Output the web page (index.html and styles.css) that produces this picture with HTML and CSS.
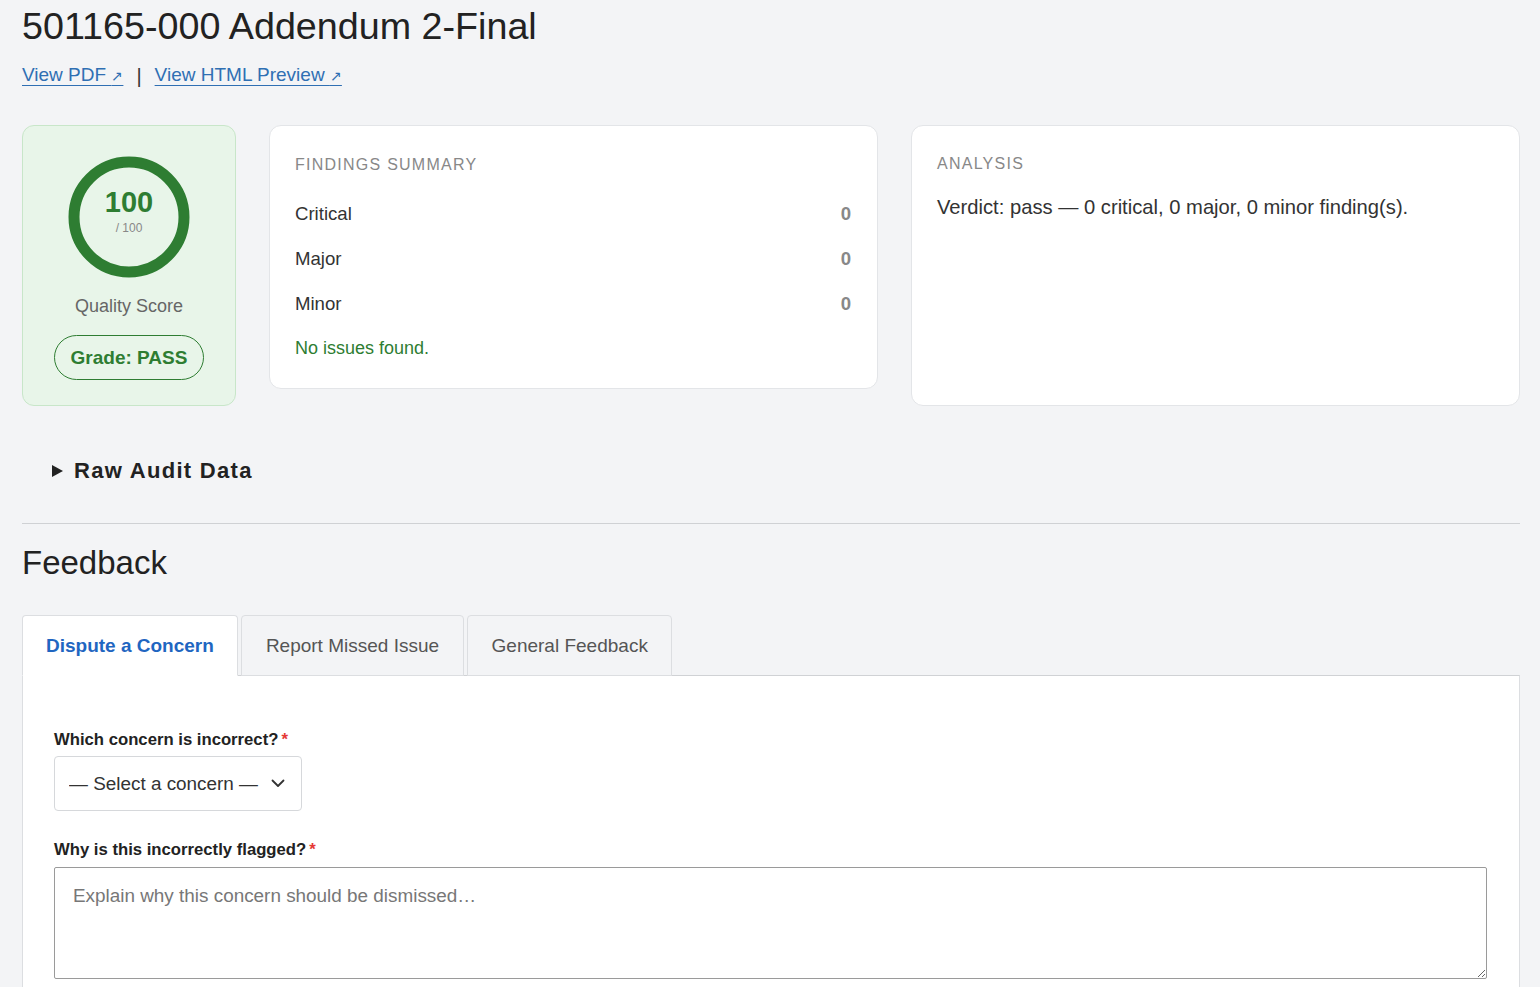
FILE: index.html
```html
<!DOCTYPE html>
<html lang="en">
<head>
<meta charset="utf-8">
<title>501165-000 Addendum 2-Final</title>
<link rel="stylesheet" href="styles.css">
</head>
<body>
<main class="page">
  <h1 class="title">501165-000 Addendum 2-Final</h1>
  <div class="doc-links">
    <a href="#" class="doc-link">View PDF <span class="ext">↗</span></a>
    <span class="sep">|</span>
    <a href="#" class="doc-link">View HTML Preview <span class="ext">↗</span></a>
  </div>

  <section class="cards">
    <div class="card score-card">
      <div class="ring">
        <svg width="122" height="122" viewBox="0 0 122 122" aria-hidden="true">
          <circle cx="61" cy="61" r="55" fill="none" stroke="#2e7d32" stroke-width="11"/>
        </svg>
        <div class="ring-text">
          <div class="ring-num">100</div>
          <div class="ring-max">/ 100</div>
        </div>
      </div>
      <div class="score-label">Quality Score</div>
      <div class="grade">Grade: PASS</div>
    </div>

    <div class="card findings-card">
      <div class="card-label">Findings Summary</div>
      <div class="row"><span>Critical</span><span class="count">0</span></div>
      <div class="row"><span>Major</span><span class="count">0</span></div>
      <div class="row"><span>Minor</span><span class="count">0</span></div>
      <div class="ok-note">No issues found.</div>
    </div>

    <div class="card analysis-card">
      <div class="card-label">Analysis</div>
      <p class="verdict">Verdict: pass — 0 critical, 0 major, 0 minor finding(s).</p>
    </div>
  </section>

  <details class="raw">
    <summary class="raw-summary"><span class="tri"></span>Raw Audit Data</summary>
  </details>

  <hr class="divider">

  <h2 class="section-title">Feedback</h2>

  <div class="tabs">
    <button class="tab active">Dispute a Concern</button>
    <button class="tab">Report Missed Issue</button>
    <button class="tab">General Feedback</button>
  </div>
  <div class="panel">
    <label class="field-label">Which concern is incorrect?<span class="req">*</span></label>
    <div class="select-wrap">
      <select class="select">
        <option>— Select a concern —</option>
      </select>
      <svg class="chev" width="14" height="9" viewBox="0 0 14 9" aria-hidden="true">
        <path d="M1.5 1.5 L7 7 L12.5 1.5" fill="none" stroke="#333" stroke-width="1.8" stroke-linecap="round" stroke-linejoin="round"/>
      </svg>
    </div>
    <label class="field-label second">Why is this incorrectly flagged?<span class="req">*</span></label>
    <textarea class="textarea" placeholder="Explain why this concern should be dismissed…"></textarea>
  </div>
</main>
</body>
</html>
```

FILE: styles.css
```css
* { box-sizing: border-box; }

html, body {
  margin: 0;
  padding: 0;
  background: #f3f4f6;
}

body {
  font-family: "Liberation Sans", Arial, sans-serif;
  color: #333;
  font-size: 18px;
}

.page {
  padding: 4px 20px 0 22px;
}

.title {
  margin: 0;
  font-size: 37.7px;
  line-height: 44px;
  font-weight: 400;
  color: #222;
}

.doc-links {
  margin-top: 15px;
  line-height: 24px;
  font-size: 19px;
  display: flex;
  align-items: center;
}

.doc-link {
  color: #2f6fb3;
  text-decoration: underline;
  text-underline-offset: 4px;
  text-decoration-thickness: 1px;
}

.ext {
  font-size: 14px;
}

.sep {
  margin: 0 13px 0 13px;
  color: #333;
  font-size: 20px;
}

.cards {
  margin-top: 37px;
  display: grid;
  grid-template-columns: 214px 1fr 1fr;
  column-gap: 33px;
  align-items: stretch;
}

.card {
  background: #fff;
  border: 1px solid #e3e5e8;
  border-radius: 12px;
}

.score-card {
  background: #e8f5e9;
  border-color: #c8e6c9;
  padding: 30px 0 25px;
  display: flex;
  flex-direction: column;
  align-items: center;
}

.ring {
  position: relative;
  width: 122px;
  height: 122px;
}

.ring svg { display: block; }

.ring-text {
  position: absolute;
  inset: 0;
  display: flex;
  flex-direction: column;
  align-items: center;
  justify-content: center;
  padding-bottom: 12px;
}

.ring-num {
  font-size: 29px;
  line-height: 32px;
  font-weight: 700;
  color: #2e7d32;
}

.ring-max {
  margin-top: 2px;
  font-size: 12px;
  line-height: 16px;
  color: #888;
}

.score-label {
  margin-top: 17px;
  font-size: 18px;
  line-height: 22px;
  color: #666;
}

.grade {
  margin-top: 18px;
  height: 45px;
  width: 150px;
  border: 1px solid #2e7d32;
  border-radius: 23px;
  display: flex;
  align-items: center;
  justify-content: center;
  font-size: 19px;
  font-weight: 700;
  color: #2e7d32;
}

.findings-card {
  align-self: start;
  padding: 29px 26px 27px 25px;
}

.analysis-card {
  padding: 28px 26px 27px 25px;
}

.card-label {
  font-size: 16px;
  line-height: 20px;
  text-transform: uppercase;
  letter-spacing: 1.25px;
  color: #888;
}

.row {
  display: flex;
  justify-content: space-between;
  padding: 10px 0;
  line-height: 25px;
  font-size: 18.6px;
  color: #333;
}

.findings-card .card-label {
  margin-bottom: 16px;
}

.count {
  font-weight: 700;
  color: #888;
}

.ok-note {
  margin-top: 10px;
  line-height: 25px;
  font-size: 18px;
  color: #2e7d32;
}

.verdict {
  margin: 21px 0 0;
  font-size: 20.2px;
  line-height: 25px;
  color: #333;
}

.raw {
  margin-top: 51px;
  padding-left: 30px;
}

.raw-summary {
  list-style: none;
  display: flex;
  align-items: center;
  font-size: 22px;
  font-weight: 700;
  letter-spacing: 1.3px;
  line-height: 28px;
  color: #222;
  cursor: pointer;
}

.raw-summary::-webkit-details-marker { display: none; }

.tri {
  width: 0;
  height: 0;
  border-top: 6px solid transparent;
  border-bottom: 6px solid transparent;
  border-left: 11px solid #222;
  margin-right: 11px;
}

.divider {
  margin: 38px 0 0;
  border: 0;
  border-top: 1px solid #cfd1d4;
}

.section-title {
  margin: 20px 0 0;
  font-size: 33px;
  line-height: 38px;
  font-weight: 400;
  color: #222;
}

.tabs {
  margin-top: 33px;
  display: flex;
  gap: 3.5px;
  position: relative;
  z-index: 1;
  margin-bottom: -1px;
}

.tab {
  height: 61px;
  padding: 0 23.5px;
  border: 1px solid #dcdee1;
  border-radius: 4px 4px 0 0;
  background: #f3f4f6;
  font-family: inherit;
  font-size: 19px;
  color: #555;
  cursor: pointer;
}

.tab.active {
  padding: 0 23px;
  background: #fff;
  border-bottom-color: #fff;
  color: #1f66c1;
  font-weight: 700;
}

.panel {
  background: #fff;
  border: 1px solid #dcdee1;
  border-top-color: #d0d2d5;
  padding: 54px 32px 40px 31px;
}

.field-label {
  display: block;
  font-size: 16.7px;
  line-height: 20px;
  font-weight: 700;
  color: #222;
}

.field-label.second {
  margin-top: 29px;
}

.req {
  color: #e53935;
  margin-left: 3px;
}

.select-wrap {
  position: relative;
  margin-top: 6px;
  width: 248px;
}

.select {
  appearance: none;
  -webkit-appearance: none;
  width: 100%;
  height: 55px;
  padding: 0 40px 0 14px;
  border: 1px solid #d6d8db;
  border-radius: 4px;
  background: #fff;
  font-family: inherit;
  font-size: 18.9px;
  color: #333;
}

.chev {
  position: absolute;
  right: 17px;
  top: 23px;
  pointer-events: none;
}

.textarea {
  display: block;
  margin-top: 7px;
  width: 100%;
  height: 112px;
  padding: 16px 18px;
  border: 1px solid #9a9a9a;
  border-radius: 2px;
  font-family: inherit;
  font-size: 18.9px;
  line-height: 24px;
  color: #333;
  resize: vertical;
}

.textarea::placeholder {
  color: #777;
}
```
